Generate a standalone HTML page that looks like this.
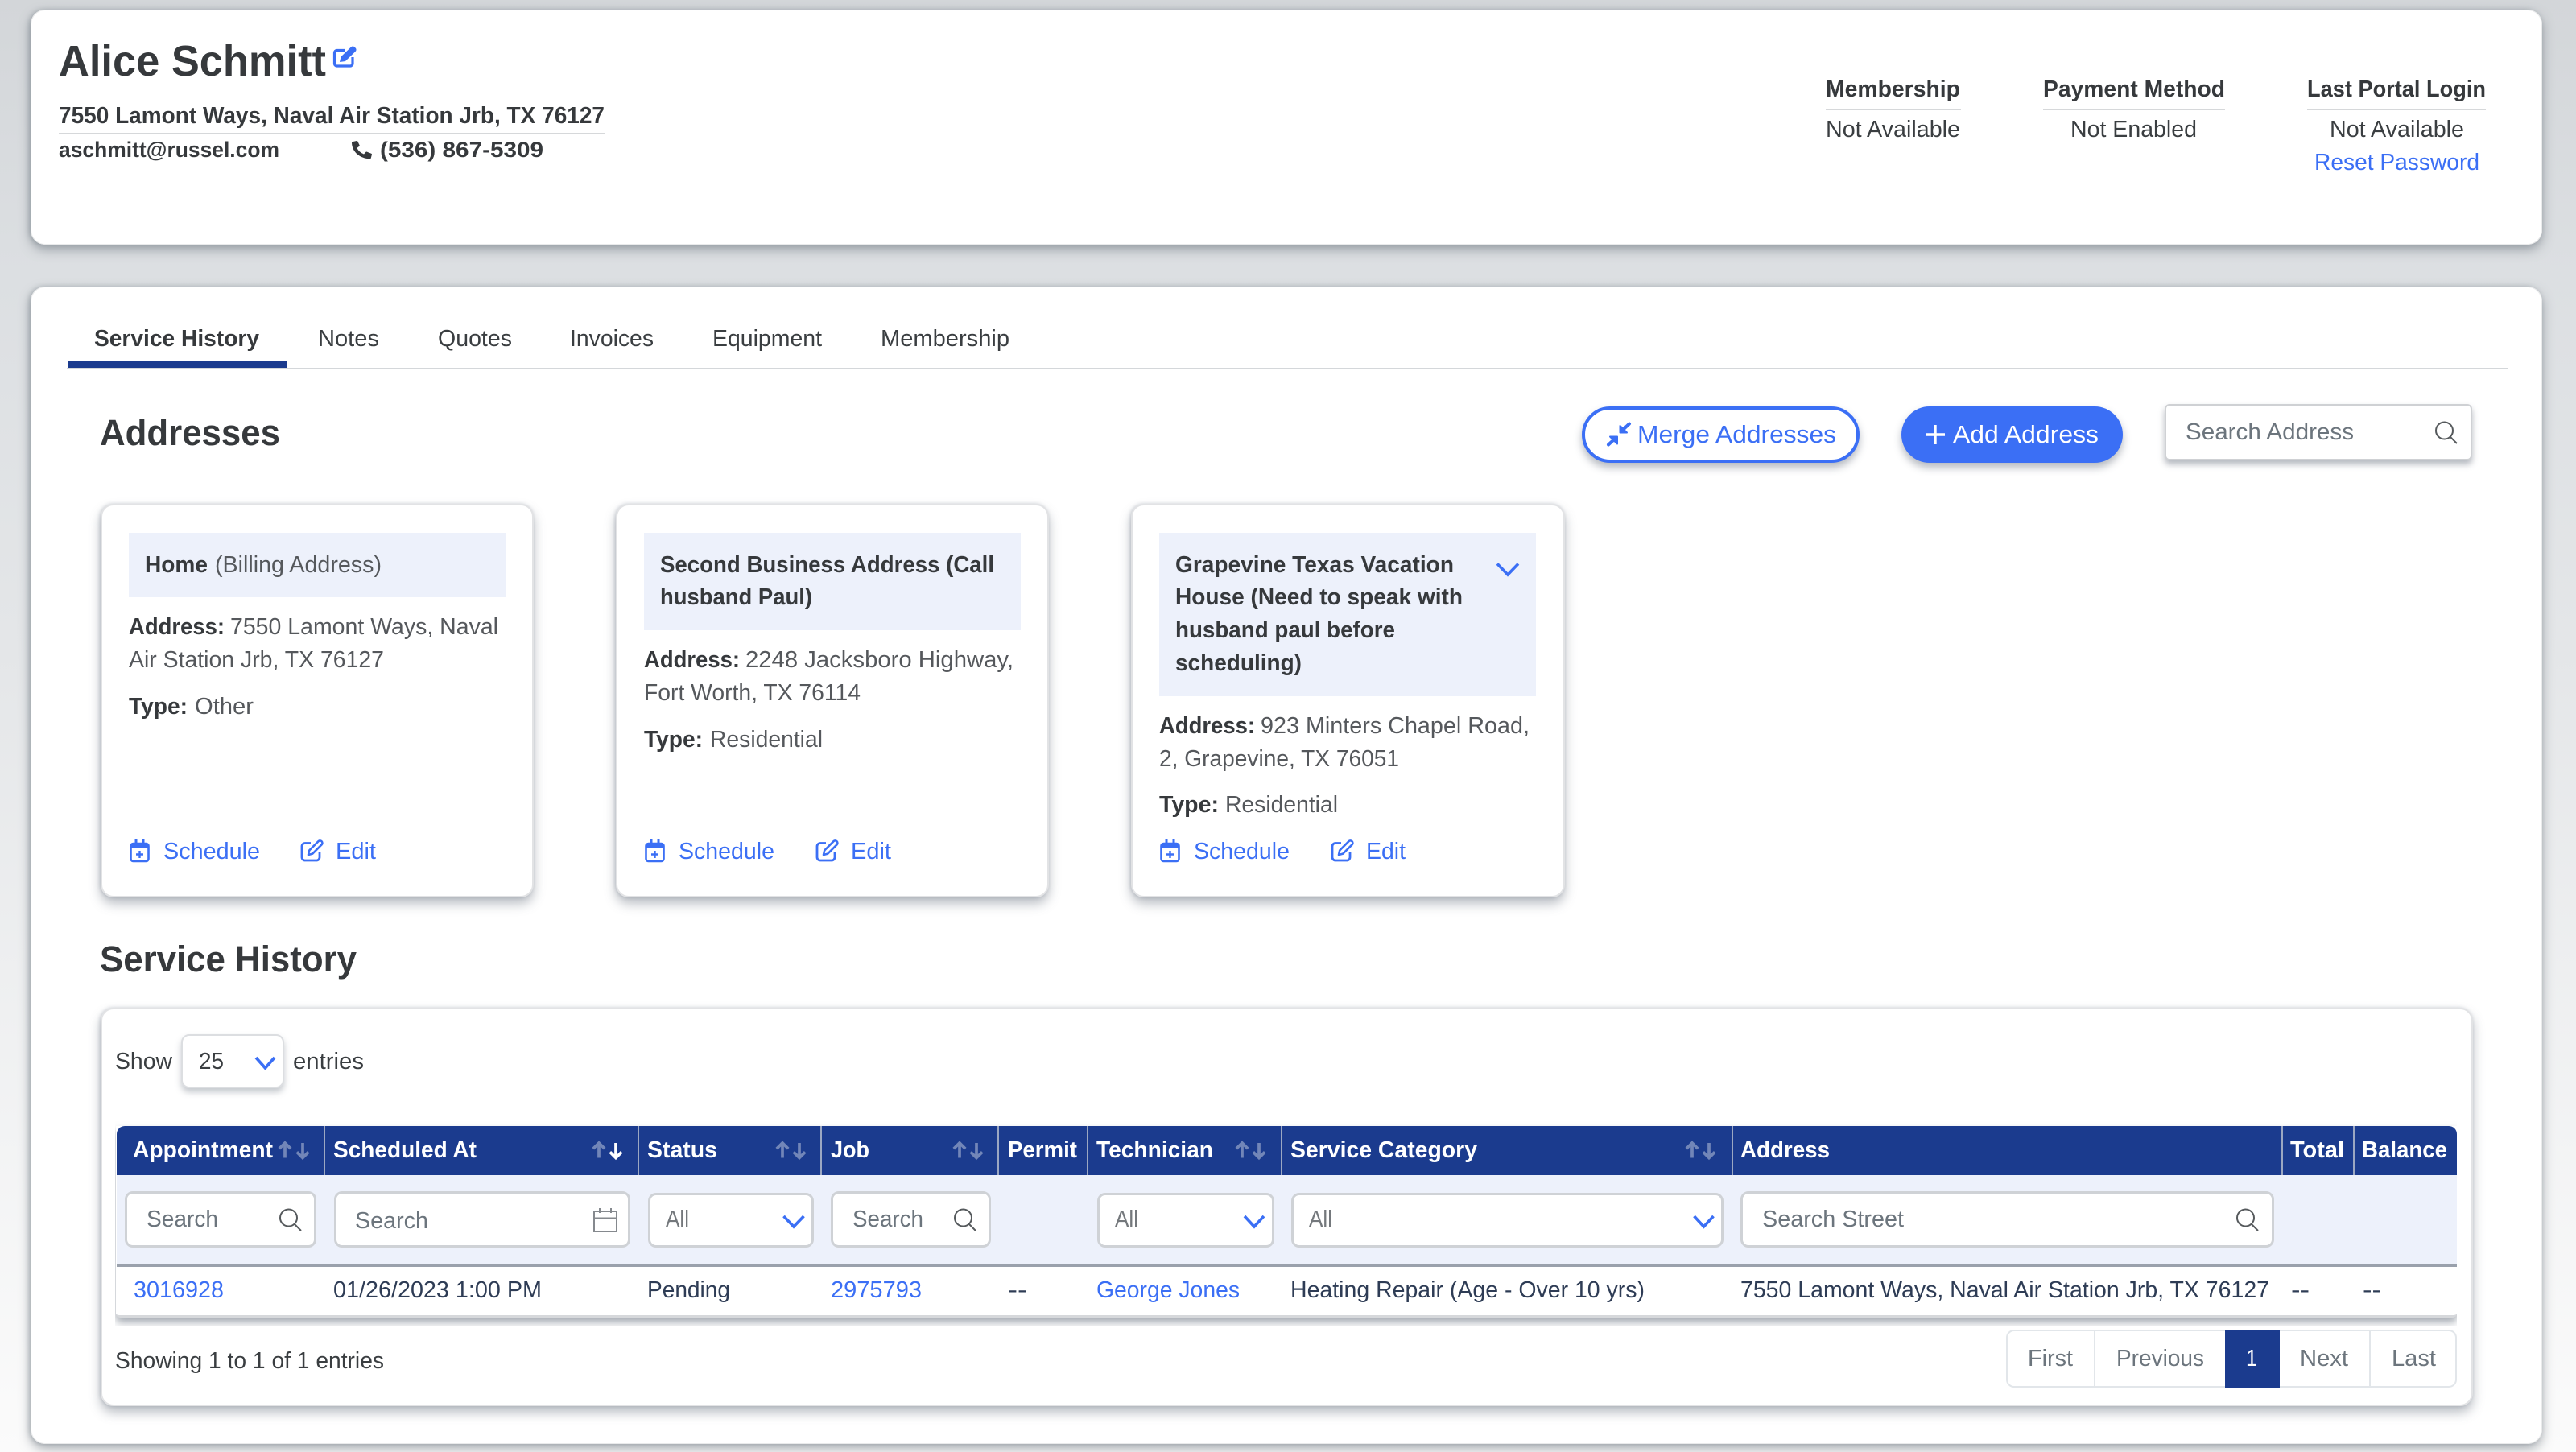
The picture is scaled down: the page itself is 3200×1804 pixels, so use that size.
<!DOCTYPE html>
<html lang="en"><head><meta charset="utf-8"><title>Alice Schmitt</title>
<style>
html,body{margin:0;padding:0;width:3200px;height:1804px;overflow:hidden}
body{position:relative;background:linear-gradient(180deg,#d3d6d9 0,#dcdfe2 340px,#e4e6e8 800px,#f0f1f2 1300px,#fbfbfb 1804px);font-family:"Liberation Sans",sans-serif}
.a{position:absolute;box-sizing:border-box}
.card{background:#fff;border-radius:18px;box-shadow:-2px 0 6px rgba(110,120,130,.35),0 6px 14px rgba(90,100,110,.5),inset 0 0 0 1px #e9eaeb}
.sub{background:#fff;border:2px solid #e2e3e5;border-radius:16px;box-shadow:0 8px 14px rgba(90,100,115,.42),-1px 0 4px rgba(110,120,135,.3)}
.hd{background:#edf1fb}
.inp{background:#fff;border:3px solid #cfd2d6;border-radius:10px}
svg{position:absolute;left:0;top:0}
text{font-family:"Liberation Sans",sans-serif;font-size:29px;fill:#3a3e41;white-space:pre}
.b{font-weight:700;fill:#36393c}
.g{fill:#55585c}
.l{fill:#3b6ff5}
.w{font-weight:700;fill:#fff}
.p{fill:#6c757d}
.d{fill:#2e3c55}
.k{stroke:#3b6ff5;fill:none;stroke-width:3.6}
.m{stroke:#55595c;fill:none;stroke-width:2.2}
</style></head><body>
<div class="a card" style="left:38px;top:12px;width:3120px;height:292px"></div>
<div class="a card" style="left:38px;top:356px;width:3120px;height:1438px"></div>

<div class="a" style="left:84px;top:449px;width:273px;height:8px;background:#1b3b8e"></div>
<div class="a" style="left:83px;top:457px;width:3032px;height:2px;background:#d4d7da"></div>

<div class="a" style="left:73px;top:165px;width:678px;height:2px;background:#d6d8da"></div>
<div class="a" style="left:2268px;top:135px;width:168px;height:2px;background:#d6d8da"></div>
<div class="a" style="left:2538px;top:135px;width:226px;height:2px;background:#d6d8da"></div>
<div class="a" style="left:2866px;top:135px;width:222px;height:2px;background:#d6d8da"></div>

<div class="a" style="left:1965px;top:505px;width:345px;height:70px;background:#fff;border:4px solid #3b6ff5;border-radius:35px;box-shadow:0 6px 10px rgba(90,100,115,.45)"></div>
<div class="a" style="left:2362px;top:505px;width:275px;height:70px;background:#3b6ff5;border-radius:35px;box-shadow:0 6px 10px rgba(90,100,115,.45)"></div>
<div class="a" style="left:2689px;top:502px;width:382px;height:70px;background:#fff;border:2px solid #cfd1d4;border-radius:6px;box-shadow:0 5px 8px rgba(90,100,115,.45)"></div>

<div class="a sub" style="left:125px;top:626px;width:538px;height:489px"></div>
<div class="a sub" style="left:765px;top:626px;width:538px;height:489px"></div>
<div class="a sub" style="left:1405px;top:626px;width:539px;height:489px"></div>
<div class="a hd" style="left:160px;top:662px;width:468px;height:80px"></div>
<div class="a hd" style="left:800px;top:662px;width:468px;height:121px"></div>
<div class="a hd" style="left:1440px;top:662px;width:468px;height:203px"></div>

<div class="a sub" style="left:125px;top:1252px;width:2947px;height:495px"></div>
<div class="a" style="left:225px;top:1285px;width:128px;height:67px;background:#fff;border:2px solid #dcdee1;border-radius:10px;box-shadow:0 5px 8px rgba(90,100,115,.35)"></div>

<div class="a" style="left:143px;top:1390px;width:2909px;height:258px;overflow:hidden">
  <div class="a" style="left:1px;top:9px;width:2908px;height:238px;background:#fff;border-bottom:3px solid #d6d8db;border-radius:0 0 5px 5px;box-shadow:0 6px 10px rgba(90,100,115,.55)"></div>
  <div class="a" style="left:2px;top:9px;width:2907px;height:61px;background:#1b3b8e;border-radius:10px 10px 0 0"></div>
  <div class="a hd" style="left:2px;top:70px;width:2907px;height:114px;border-bottom:3px solid #9aa1ac"></div>
</div>
<div class="a" style="left:402px;top:1399px;width:2px;height:61px;background:#9ba7c2"></div>
<div class="a" style="left:792px;top:1399px;width:2px;height:61px;background:#9ba7c2"></div>
<div class="a" style="left:1019px;top:1399px;width:2px;height:61px;background:#9ba7c2"></div>
<div class="a" style="left:1239px;top:1399px;width:2px;height:61px;background:#9ba7c2"></div>
<div class="a" style="left:1350px;top:1399px;width:2px;height:61px;background:#9ba7c2"></div>
<div class="a" style="left:1591px;top:1399px;width:2px;height:61px;background:#9ba7c2"></div>
<div class="a" style="left:2151px;top:1399px;width:2px;height:61px;background:#9ba7c2"></div>
<div class="a" style="left:2834px;top:1399px;width:2px;height:61px;background:#9ba7c2"></div>
<div class="a" style="left:2923px;top:1399px;width:2px;height:61px;background:#9ba7c2"></div>

<div class="a inp" style="left:155px;top:1480px;width:238px;height:70px"></div>
<div class="a inp" style="left:415px;top:1480px;width:368px;height:70px"></div>
<div class="a inp" style="left:805px;top:1482px;width:206px;height:68px"></div>
<div class="a inp" style="left:1032px;top:1480px;width:199px;height:70px"></div>
<div class="a inp" style="left:1363px;top:1482px;width:220px;height:68px"></div>
<div class="a inp" style="left:1604px;top:1482px;width:537px;height:68px"></div>
<div class="a inp" style="left:2162px;top:1480px;width:663px;height:70px"></div>

<div class="a" style="left:2492px;top:1652px;width:560px;height:72px;background:#fff;border:2px solid #e2e6ea;border-radius:10px"></div>
<div class="a" style="left:2601px;top:1653px;width:2px;height:70px;background:#e2e6ea"></div>
<div class="a" style="left:2943px;top:1653px;width:2px;height:70px;background:#e2e6ea"></div>
<div class="a" style="left:2764px;top:1652px;width:68px;height:72px;background:#1b3b8e"></div>

<svg width="3200" height="1804" viewBox="0 0 3200 1804" xmlns="http://www.w3.org/2000/svg">
<defs>
<g id="cal"><path d="M4 5h16a3 3 0 0 1 3 3v16a3 3 0 0 1-3 3H4a3 3 0 0 1-3-3V8a3 3 0 0 1 3-3z" fill="none" stroke="#3b6ff5" stroke-width="2.6"/><path d="M1 11V7a3 3 0 0 1 3-3h2V0h3v4h6V0h3v4h2a3 3 0 0 1 3 3v4z" fill="#3b6ff5"/><path d="M12 14v9M7.5 18.500h9" stroke="#3b6ff5" stroke-width="2.4" fill="none"/></g>
<g id="ed"><path d="M13 4.500H6a4 4 0 0 0-4 4V22a4 4 0 0 0 4 4h14a4 4 0 0 0 4-4v-7" fill="none" stroke="#3b6ff5" stroke-width="2.800"/><path d="M10 19l1.200-5.500L22.500 2.200a2.900 2.900 0 0 1 4.100 4.100L15.300 17.600z" fill="none" stroke="#3b6ff5" stroke-width="2.600" stroke-linejoin="round"/></g>
<g id="mag"><circle cx="12.500" cy="12" r="10.500" fill="none" stroke="#55595c" stroke-width="2"/><path d="M20 20l8 8" fill="none" stroke="#55595c" stroke-width="2"/></g>
<g id="au"><path d="M8 20.500V2M.8 9.200L8 2l7.200 7.200" fill="none" stroke-width="3.700"/></g>
<g id="ad"><path d="M8 0v18.500M.8 11.300L8 18.500l7.200-7.200" fill="none" stroke-width="3.700"/></g>
</defs>

<text class="b" x="73" y="94" textLength="332" lengthAdjust="spacingAndGlyphs" style="font-size:54px">Alice Schmitt</text>
<path d="M428 62.500h-9.500a3 3 0 0 0-3 3V79a3 3 0 0 0 3 3H435a3 3 0 0 0 3-3v-8" fill="none" stroke="#3b6ff5" stroke-width="3.200"/>
<path d="M422 77l1.500-6.500L436 58.500a3 3 0 0 1 4.500 0l1 1a3 3 0 0 1 0 4.500L429 76z" fill="#3b6ff5"/>

<text class="b" x="73" y="153" textLength="678" lengthAdjust="spacingAndGlyphs">7550 Lamont Ways, Naval Air Station Jrb, TX 76127</text>
<text class="b" x="73" y="195" textLength="274" lengthAdjust="spacingAndGlyphs" style="font-size:27px">aschmitt@russel.com</text>
<path transform="translate(437 175) scale(.0488 .0434)" fill="#36393c" d="M497.390 361.800l-112-48a24 24 0 0 0-28 6.900l-49.600 60.600A370.660 370.660 0 0 1 130.600 204.110l60.600-49.600a23.940 23.940 0 0 0 6.900-28l-48-112A24.160 24.160 0 0 0 122.600.610l-104 24A24 24 0 0 0 0 48c0 256.500 207.900 464 464 464a24 24 0 0 0 23.400-18.600l24-104a24.290 24.290 0 0 0-14.010-27.600z"/>
<text class="b" x="472" y="195" textLength="203" lengthAdjust="spacingAndGlyphs" style="font-size:27px">(536) 867-5309</text>

<text class="b" x="2268" y="120" textLength="167" lengthAdjust="spacingAndGlyphs">Membership</text>
<text class="b" x="2538" y="120" textLength="226" lengthAdjust="spacingAndGlyphs">Payment Method</text>
<text class="b" x="2866" y="120" textLength="222" lengthAdjust="spacingAndGlyphs">Last Portal Login</text>
<text x="2268" y="170" textLength="167" lengthAdjust="spacingAndGlyphs">Not Available</text>
<text x="2572" y="170" textLength="157" lengthAdjust="spacingAndGlyphs">Not Enabled</text>
<text x="2894" y="170" textLength="167" lengthAdjust="spacingAndGlyphs">Not Available</text>
<text class="l" x="2875" y="211" textLength="205" lengthAdjust="spacingAndGlyphs">Reset Password</text>

<text class="b" x="117" y="430" textLength="205" lengthAdjust="spacingAndGlyphs">Service History</text>
<text x="395" y="430" textLength="76" lengthAdjust="spacingAndGlyphs">Notes</text>
<text x="544" y="430" textLength="92" lengthAdjust="spacingAndGlyphs">Quotes</text>
<text x="708" y="430" textLength="104" lengthAdjust="spacingAndGlyphs">Invoices</text>
<text x="885" y="430" textLength="136" lengthAdjust="spacingAndGlyphs">Equipment</text>
<text x="1094" y="430" textLength="160" lengthAdjust="spacingAndGlyphs">Membership</text>

<text class="b" x="124" y="553" textLength="224" lengthAdjust="spacingAndGlyphs" style="font-size:45px">Addresses</text>
<text class="b" x="124" y="1207" textLength="319" lengthAdjust="spacingAndGlyphs" style="font-size:45px">Service History</text>

<path d="M2012.500 529v8.500h8.500z" fill="#3b6ff5" stroke="#3b6ff5" stroke-width="2" stroke-linejoin="round"/>
<path d="M2016 534l8-7.500" stroke="#3b6ff5" stroke-width="4" stroke-linecap="round" fill="none"/>
<path d="M2009 551.500v-9h-9z" fill="#3b6ff5" stroke="#3b6ff5" stroke-width="2" stroke-linejoin="round"/>
<path d="M2004 547l-6 5.500" stroke="#3b6ff5" stroke-width="4" stroke-linecap="round" fill="none"/>
<text class="l" x="2034" y="550" textLength="247" lengthAdjust="spacingAndGlyphs" style="font-size:31px">Merge Addresses</text>
<path d="M2404 528v24M2392 540h24" stroke="#fff" stroke-width="3.400" fill="none"/>
<text x="2426" y="550" textLength="181" lengthAdjust="spacingAndGlyphs" style="font-size:31px;fill:#fff">Add Address</text>
<text class="p" x="2715" y="546" textLength="209" lengthAdjust="spacingAndGlyphs">Search Address</text>
<use href="#mag" x="3024" y="523"/>

<text class="b" x="180" y="711" textLength="78" lengthAdjust="spacingAndGlyphs">Home</text>
<text class="g" x="267" y="711" textLength="207" lengthAdjust="spacingAndGlyphs">(Billing Address)</text>
<text class="b" x="160" y="788" textLength="119" lengthAdjust="spacingAndGlyphs">Address:</text>
<text class="g" x="286" y="788" textLength="333" lengthAdjust="spacingAndGlyphs">7550 Lamont Ways, Naval</text>
<text class="g" x="160" y="829" textLength="317" lengthAdjust="spacingAndGlyphs">Air Station Jrb, TX 76127</text>
<text class="b" x="160" y="887" textLength="73" lengthAdjust="spacingAndGlyphs">Type:</text>
<text class="g" x="242" y="887" textLength="73" lengthAdjust="spacingAndGlyphs">Other</text>
<use href="#cal" x="161.500" y="1043"/>
<text class="l" x="203" y="1067" textLength="120" lengthAdjust="spacingAndGlyphs">Schedule</text>
<use href="#ed" x="373" y="1043"/>
<text class="l" x="417" y="1067" textLength="50" lengthAdjust="spacingAndGlyphs">Edit</text>

<text class="b" x="820" y="711" textLength="415" lengthAdjust="spacingAndGlyphs">Second Business Address (Call</text>
<text class="b" x="820" y="751" textLength="189" lengthAdjust="spacingAndGlyphs">husband Paul)</text>
<text class="b" x="800" y="829" textLength="119" lengthAdjust="spacingAndGlyphs">Address:</text>
<text class="g" x="926" y="829" textLength="333" lengthAdjust="spacingAndGlyphs">2248 Jacksboro Highway,</text>
<text class="g" x="800" y="870" textLength="269" lengthAdjust="spacingAndGlyphs">Fort Worth, TX 76114</text>
<text class="b" x="800" y="928" textLength="73" lengthAdjust="spacingAndGlyphs">Type:</text>
<text class="g" x="882" y="928" textLength="140" lengthAdjust="spacingAndGlyphs">Residential</text>
<use href="#cal" x="801.500" y="1043"/>
<text class="l" x="843" y="1067" textLength="119" lengthAdjust="spacingAndGlyphs">Schedule</text>
<use href="#ed" x="1013" y="1043"/>
<text class="l" x="1057" y="1067" textLength="50" lengthAdjust="spacingAndGlyphs">Edit</text>

<text class="b" x="1460" y="711" textLength="346" lengthAdjust="spacingAndGlyphs">Grapevine Texas Vacation</text>
<text class="b" x="1460" y="751" textLength="357" lengthAdjust="spacingAndGlyphs">House (Need to speak with</text>
<text class="b" x="1460" y="792" textLength="273" lengthAdjust="spacingAndGlyphs">husband paul before</text>
<text class="b" x="1460" y="833" textLength="157" lengthAdjust="spacingAndGlyphs">scheduling)</text>
<path class="k" d="M1860 700.500l13 13.500 13-13.500"/>
<text class="b" x="1440" y="911" textLength="119" lengthAdjust="spacingAndGlyphs">Address:</text>
<text class="g" x="1566" y="911" textLength="334" lengthAdjust="spacingAndGlyphs">923 Minters Chapel Road,</text>
<text class="g" x="1440" y="952" textLength="298" lengthAdjust="spacingAndGlyphs">2, Grapevine, TX 76051</text>
<text class="b" x="1440" y="1009" textLength="74" lengthAdjust="spacingAndGlyphs">Type:</text>
<text class="g" x="1522" y="1009" textLength="140" lengthAdjust="spacingAndGlyphs">Residential</text>
<use href="#cal" x="1441.500" y="1043"/>
<text class="l" x="1483" y="1067" textLength="119" lengthAdjust="spacingAndGlyphs">Schedule</text>
<use href="#ed" x="1653" y="1043"/>
<text class="l" x="1697" y="1067" textLength="49" lengthAdjust="spacingAndGlyphs">Edit</text>

<text x="143" y="1328" textLength="71" lengthAdjust="spacingAndGlyphs">Show</text>
<text x="247" y="1328" textLength="31" lengthAdjust="spacingAndGlyphs">25</text>
<path class="k" d="M318 1314l11.500 13 11.500-13"/>
<text x="364" y="1328" textLength="88" lengthAdjust="spacingAndGlyphs">entries</text>

<text class="w" x="165" y="1438" textLength="174" lengthAdjust="spacingAndGlyphs">Appointment</text>
<text class="w" x="414" y="1438" textLength="178" lengthAdjust="spacingAndGlyphs">Scheduled At</text>
<text class="w" x="804" y="1438" textLength="87" lengthAdjust="spacingAndGlyphs">Status</text>
<text class="w" x="1032" y="1438" textLength="48" lengthAdjust="spacingAndGlyphs">Job</text>
<text class="w" x="1252" y="1438" textLength="86" lengthAdjust="spacingAndGlyphs">Permit</text>
<text class="w" x="1362" y="1438" textLength="145" lengthAdjust="spacingAndGlyphs">Technician</text>
<text class="w" x="1603" y="1438" textLength="232" lengthAdjust="spacingAndGlyphs">Service Category</text>
<text class="w" x="2162" y="1438" textLength="111" lengthAdjust="spacingAndGlyphs">Address</text>
<text class="w" x="2845" y="1438" textLength="67" lengthAdjust="spacingAndGlyphs">Total</text>
<text class="w" x="2934" y="1438" textLength="106" lengthAdjust="spacingAndGlyphs">Balance</text>

<g stroke="#7286b8">
<use href="#au" x="346" y="1418"/><use href="#ad" x="368" y="1420"/>
<use href="#au" x="736" y="1418"/>
<use href="#au" x="964" y="1418"/><use href="#ad" x="985" y="1420"/>
<use href="#au" x="1184" y="1418"/><use href="#ad" x="1205" y="1420"/>
<use href="#au" x="1535" y="1418"/><use href="#ad" x="1556" y="1420"/>
<use href="#au" x="2094" y="1418"/><use href="#ad" x="2115" y="1420"/>
</g>
<g stroke="#fff"><use href="#ad" x="757" y="1420"/></g>

<text class="p" x="182" y="1524" textLength="89" lengthAdjust="spacingAndGlyphs">Search</text>
<use href="#mag" x="346" y="1501"/>
<text class="p" x="441" y="1526" textLength="91" lengthAdjust="spacingAndGlyphs">Search</text>
<path d="M738 1505h28v25h-28zM738 1513.500h28M745 1501v6M759 1501v6" fill="none" stroke="#85898e" stroke-width="2"/>
<text class="p" x="827" y="1524" textLength="29" lengthAdjust="spacingAndGlyphs" style="fill:#74787c">All</text>
<path class="k" d="M973.500 1511l12.500 13 12.500-13"/>
<text class="p" x="1059" y="1524" textLength="88" lengthAdjust="spacingAndGlyphs">Search</text>
<use href="#mag" x="1184" y="1501"/>
<text class="p" x="1385" y="1524" textLength="29" lengthAdjust="spacingAndGlyphs" style="fill:#74787c">All</text>
<path class="k" d="M1546 1511l12 13 12-13"/>
<text class="p" x="1626" y="1524" textLength="29" lengthAdjust="spacingAndGlyphs" style="fill:#74787c">All</text>
<path class="k" d="M2104.500 1511l12 13 12-13"/>
<text class="p" x="2189" y="1524" textLength="176" lengthAdjust="spacingAndGlyphs">Search Street</text>
<use href="#mag" x="2777" y="1501"/>

<text class="l" x="166" y="1612" textLength="112" lengthAdjust="spacingAndGlyphs">3016928</text>
<text class="d" x="414" y="1612" textLength="259" lengthAdjust="spacingAndGlyphs">01/26/2023 1:00 PM</text>
<text class="d" x="804" y="1612" textLength="103" lengthAdjust="spacingAndGlyphs">Pending</text>
<text class="l" x="1032" y="1612" textLength="113" lengthAdjust="spacingAndGlyphs">2975793</text>
<text class="d" x="1252" y="1612" textLength="24" lengthAdjust="spacingAndGlyphs">--</text>
<text class="l" x="1362" y="1612" textLength="178" lengthAdjust="spacingAndGlyphs">George Jones</text>
<text class="d" x="1603" y="1612" textLength="440" lengthAdjust="spacingAndGlyphs">Heating Repair (Age - Over 10 yrs)</text>
<text class="d" x="2162" y="1612" textLength="657" lengthAdjust="spacingAndGlyphs">7550 Lamont Ways, Naval Air Station Jrb, TX 76127</text>
<text class="d" x="2846" y="1612" textLength="23" lengthAdjust="spacingAndGlyphs">--</text>
<text class="d" x="2935" y="1612" textLength="23" lengthAdjust="spacingAndGlyphs">--</text>

<text x="143" y="1700" textLength="334" lengthAdjust="spacingAndGlyphs">Showing 1 to 1 of 1 entries</text>

<text class="p" x="2519" y="1697" textLength="56" lengthAdjust="spacingAndGlyphs">First</text>
<text class="p" x="2629" y="1697" textLength="109" lengthAdjust="spacingAndGlyphs">Previous</text>
<text x="2790" y="1697" textLength="14" lengthAdjust="spacingAndGlyphs" style="fill:#fff">1</text>
<text class="p" x="2857" y="1697" textLength="60" lengthAdjust="spacingAndGlyphs">Next</text>
<text class="p" x="2971" y="1697" textLength="55" lengthAdjust="spacingAndGlyphs">Last</text>
</svg>
</body></html>
